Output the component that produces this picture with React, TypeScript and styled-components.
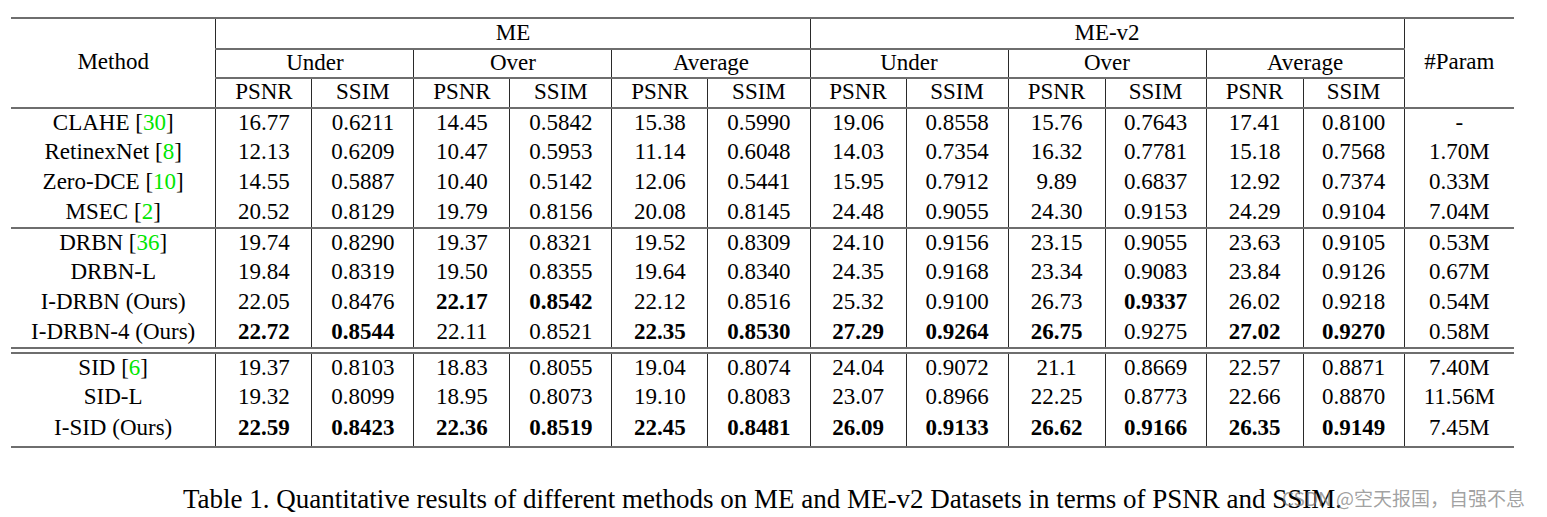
import React from "react";
import styled, { createGlobalStyle } from "styled-components";

const GlobalStyle = createGlobalStyle`
  html, body {
    margin: 0;
    padding: 0;
    background: #ffffff;
  }
`;

const Page = styled.div`
  position: relative;
  width: 1547px;
  height: 517px;
  padding: 17px 0 0 11px;
  box-sizing: border-box;
  font-family: "Liberation Serif", "Times New Roman", serif;
  color: #000;
  overflow: hidden;
`;

const Figure = styled.div`
  display: flex;
  flex-direction: column;
  align-items: center;
  width: 1503px;
`;

const Table = styled.table`
  border-collapse: collapse;
  table-layout: fixed;
  width: 1503px;
  font-size: 23px;
  line-height: 1;
  border-top: 2px solid #6e6e6e;
  border-bottom: 2px solid #6e6e6e;
`;

const HeadRow = styled.tr<{ $h: number }>`
  height: ${(p) => p.$h}px;
`;

const HeadCell = styled.th<{ $right?: boolean; $bottom?: boolean }>`
  font-weight: normal;
  text-align: center;
  vertical-align: middle;
  padding: 0 0 3px;
  border-right: ${(p) => (p.$right ? "1px solid #2a2a2a" : "none")};
  border-bottom: ${(p) => (p.$bottom ? "2px solid #6e6e6e" : "none")};
`;

const Row = styled.tr<{ $ruled?: boolean; $end?: boolean }>`
  height: ${(p) => (p.$end ? 34 : 30)}px;
  & > td {
    padding-bottom: ${(p) => (p.$end ? 5 : 3)}px;
    border-bottom: ${(p) => (p.$ruled ? "2px solid #6e6e6e" : "none")};
  }
`;

const Cell = styled.td<{ $bold?: boolean; $last?: boolean }>`
  text-align: center;
  vertical-align: middle;
  padding: 0;
  font-weight: ${(p) => (p.$bold ? "bold" : "normal")};
  border-right: ${(p) => (p.$last ? "none" : "1px solid #2a2a2a")};
`;

const GapRow = styled.tr`
  height: 5px;
  & > td {
    padding: 0;
    border-bottom: 2px solid #6e6e6e;
  }
`;

const Cite = styled.span`
  color: #00e600;
`;

const Caption = styled.p`
  margin: 37px 0 0;
  font-size: 27px;
  line-height: 28px;
  text-align: center;
  white-space: nowrap;
`;

const Watermark = styled.span`
  position: absolute;
  left: 1282px;
  top: 485px;
  font-family: "Noto Sans CJK SC", "Noto Sans", sans-serif;
  font-size: 19px;
  line-height: 26px;
  color: rgba(120, 120, 120, 0.7);
  white-space: nowrap;
`;

type Value = string | { v: string; b: true };

interface Method {
  name: string;
  cite?: string;
  values: Value[];
  param: string;
}

const B = (v: string): Value => ({ v, b: true });

const groups: Method[][] = [
  [
    {
      name: "CLAHE",
      cite: "30",
      values: ["16.77", "0.6211", "14.45", "0.5842", "15.38", "0.5990", "19.06", "0.8558", "15.76", "0.7643", "17.41", "0.8100"],
      param: "-",
    },
    {
      name: "RetinexNet",
      cite: "8",
      values: ["12.13", "0.6209", "10.47", "0.5953", "11.14", "0.6048", "14.03", "0.7354", "16.32", "0.7781", "15.18", "0.7568"],
      param: "1.70M",
    },
    {
      name: "Zero-DCE",
      cite: "10",
      values: ["14.55", "0.5887", "10.40", "0.5142", "12.06", "0.5441", "15.95", "0.7912", "9.89", "0.6837", "12.92", "0.7374"],
      param: "0.33M",
    },
    {
      name: "MSEC",
      cite: "2",
      values: ["20.52", "0.8129", "19.79", "0.8156", "20.08", "0.8145", "24.48", "0.9055", "24.30", "0.9153", "24.29", "0.9104"],
      param: "7.04M",
    },
  ],
  [
    {
      name: "DRBN",
      cite: "36",
      values: ["19.74", "0.8290", "19.37", "0.8321", "19.52", "0.8309", "24.10", "0.9156", "23.15", "0.9055", "23.63", "0.9105"],
      param: "0.53M",
    },
    {
      name: "DRBN-L",
      values: ["19.84", "0.8319", "19.50", "0.8355", "19.64", "0.8340", "24.35", "0.9168", "23.34", "0.9083", "23.84", "0.9126"],
      param: "0.67M",
    },
    {
      name: "I-DRBN (Ours)",
      values: ["22.05", "0.8476", B("22.17"), B("0.8542"), "22.12", "0.8516", "25.32", "0.9100", "26.73", B("0.9337"), "26.02", "0.9218"],
      param: "0.54M",
    },
    {
      name: "I-DRBN-4 (Ours)",
      values: [B("22.72"), B("0.8544"), "22.11", "0.8521", B("22.35"), B("0.8530"), B("27.29"), B("0.9264"), B("26.75"), "0.9275", B("27.02"), B("0.9270")],
      param: "0.58M",
    },
  ],
  [
    {
      name: "SID",
      cite: "6",
      values: ["19.37", "0.8103", "18.83", "0.8055", "19.04", "0.8074", "24.04", "0.9072", "21.1", "0.8669", "22.57", "0.8871"],
      param: "7.40M",
    },
    {
      name: "SID-L",
      values: ["19.32", "0.8099", "18.95", "0.8073", "19.10", "0.8083", "23.07", "0.8966", "22.25", "0.8773", "22.66", "0.8870"],
      param: "11.56M",
    },
    {
      name: "I-SID (Ours)",
      values: [B("22.59"), B("0.8423"), B("22.36"), B("0.8519"), B("22.45"), B("0.8481"), B("26.09"), B("0.9133"), B("26.62"), B("0.9166"), B("26.35"), B("0.9149")],
      param: "7.45M",
    },
  ],
];

const widths = [205, 96, 102, 96, 102, 96, 102, 96, 102, 97, 101, 97, 101, 110];
const subsets = ["Under", "Over", "Average"];

const MethodRow = ({ m, ruled, end }: { m: Method; ruled?: boolean; end?: boolean }) => (
  <Row $ruled={ruled} $end={end}>
    <Cell>
      {m.name}
      {m.cite && (
        <>
          {" "}[<Cite>{m.cite}</Cite>]
        </>
      )}
    </Cell>
    {m.values.map((val, i) =>
      typeof val === "string" ? (
        <Cell key={i}>{val}</Cell>
      ) : (
        <Cell key={i} $bold>
          {val.v}
        </Cell>
      )
    )}
    <Cell $last>{m.param}</Cell>
  </Row>
);

const App = () => {
  return (
    <Page>
      <GlobalStyle />
      <Figure>
        <Table>
          <colgroup>
            {widths.map((w, i) => (
              <col key={i} style={{ width: w }} />
            ))}
          </colgroup>
          <thead>
            <HeadRow $h={31}>
              <HeadCell rowSpan={3} $right $bottom>
                Method
              </HeadCell>
              <HeadCell colSpan={6} $right $bottom>
                ME
              </HeadCell>
              <HeadCell colSpan={6} $right $bottom>
                ME-v2
              </HeadCell>
              <HeadCell rowSpan={3} $bottom>
                #Param
              </HeadCell>
            </HeadRow>
            <HeadRow $h={29}>
              {[0, 1].flatMap((d) =>
                subsets.map((s) => (
                  <HeadCell key={`${d}-${s}`} colSpan={2} $right $bottom>
                    {s}
                  </HeadCell>
                ))
              )}
            </HeadRow>
            <HeadRow $h={30}>
              {Array.from({ length: 6 }).flatMap((_, i) => [
                <HeadCell key={`p${i}`} $right $bottom>
                  PSNR
                </HeadCell>,
                <HeadCell key={`s${i}`} $right $bottom>
                  SSIM
                </HeadCell>,
              ])}
            </HeadRow>
          </thead>
          <tbody>
            {groups[0].map((m, i) => (
              <MethodRow key={m.name} m={m} ruled={i === groups[0].length - 1} />
            ))}
            {groups[1].map((m, i) => (
              <MethodRow key={m.name} m={m} ruled={i === groups[1].length - 1} />
            ))}
            <GapRow>
              <td colSpan={14} />
            </GapRow>
            {groups[2].map((m, i) => (
              <MethodRow key={m.name} m={m} end={i === groups[2].length - 1} />
            ))}
          </tbody>
        </Table>
        <Caption>
          Table 1. Quantitative results of different methods on ME and ME-v2 Datasets in terms of PSNR and SSIM.
        </Caption>
      </Figure>
      <Watermark>CSDN @空天报国，自强不息</Watermark>
    </Page>
  );
};

export default App;
